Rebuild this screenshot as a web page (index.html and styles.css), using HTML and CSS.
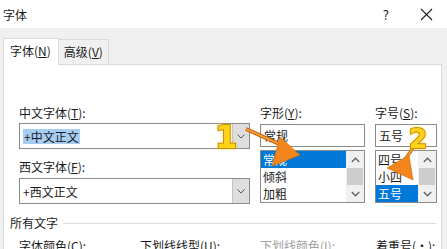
FILE: index.html
```html
<!DOCTYPE html>
<html lang="zh-CN">
<head>
  <meta charset="UTF-8">
  <title>字体</title>
  <link rel="stylesheet" href="styles.css">
</head>
<body>
  <div class="titlebar">
    <span class="title">字体</span>
    <span class="help">?</span>
    <svg class="close" width="13" height="13" viewBox="0 0 13 13"><path d="M1 1L12 12M12 1L1 12" stroke="#222" stroke-width="1.1" fill="none"/></svg>
  </div>

  <div class="tabs">
    <div class="tab active">字体(<u>N</u>)</div>
    <div class="tab">高级(<u>V</u>)</div>
  </div>

  <div class="panel">
    <div class="font-grid">
      <div class="col">
        <label>中文字体(<u>T</u>):</label>
        <div class="combo">
          <span class="combo-value"><span class="hilite">+中文正文</span></span>
          <span class="drop"><svg width="8" height="5" viewBox="0 0 8 5"><path d="M0.5 0.5L4 4L7.5 0.5" stroke="#555" fill="none"/></svg></span>
        </div>
        <label class="second">西文字体(<u>F</u>):</label>
        <div class="combo combo-low">
          <span class="combo-value">+西文正文</span>
          <span class="drop"><svg width="8" height="5" viewBox="0 0 8 5"><path d="M0.5 0.5L4 4L7.5 0.5" stroke="#555" fill="none"/></svg></span>
        </div>
      </div>

      <div class="col">
        <label>字形(<u>Y</u>):</label>
        <div class="textbox">常规</div>
        <div class="listbox">
          <ul class="items">
            <li class="sel">常规</li>
            <li>倾斜</li>
            <li>加粗</li>
          </ul>
          <div class="scrollbar">
            <span class="arrow"><svg width="9" height="6" viewBox="0 0 9 6"><path d="M0.8 5L4.5 1.2L8.2 5" stroke="#606060" stroke-width="1.3" fill="none"/></svg></span>
            <span class="thumb"></span>
            <span class="arrow"><svg width="9" height="6" viewBox="0 0 9 6"><path d="M0.8 1L4.5 4.8L8.2 1" stroke="#606060" stroke-width="1.3" fill="none"/></svg></span>
          </div>
        </div>
      </div>

      <div class="col">
        <label>字号(<u>S</u>):</label>
        <div class="textbox">五号</div>
        <div class="listbox">
          <ul class="items">
            <li>四号</li>
            <li>小四</li>
            <li class="sel">五号</li>
          </ul>
          <div class="scrollbar">
            <span class="arrow"><svg width="9" height="6" viewBox="0 0 9 6"><path d="M0.8 5L4.5 1.2L8.2 5" stroke="#606060" stroke-width="1.3" fill="none"/></svg></span>
            <span class="thumb"></span>
            <span class="arrow"><svg width="9" height="6" viewBox="0 0 9 6"><path d="M0.8 1L4.5 4.8L8.2 1" stroke="#606060" stroke-width="1.3" fill="none"/></svg></span>
          </div>
        </div>
      </div>
    </div>

    <div class="group-title"><span>所有文字</span><span class="rule"></span></div>

    <div class="effects-row">
      <span>字体颜色(<u>C</u>):</span>
      <span>下划线线型(<u>U</u>):</span>
      <span class="disabled">下划线颜色(<u>I</u>):</span>
      <span>着重号(·):</span>
    </div>
  </div>

  <!-- callout marks drawn over the dialog -->
  <svg class="callouts" width="447" height="249" viewBox="0 0 447 249">
    <defs>
      <filter id="glow" x="-50%" y="-50%" width="200%" height="200%">
        <feGaussianBlur in="SourceAlpha" stdDeviation="1.6" result="b"/>
        <feFlood flood-color="#f2c200" flood-opacity="0.55"/>
        <feComposite in2="b" operator="in" result="g"/>
        <feMerge><feMergeNode in="g"/><feMergeNode in="SourceGraphic"/></feMerge>
      </filter>
    </defs>
    <line x1="246" y1="129" x2="288" y2="148" stroke="#c85f00" stroke-width="3.6"/>
    <line x1="246" y1="129" x2="288" y2="148" stroke="#f7a640" stroke-width="1.8"/>
    <polygon points="272,166 280,137 300,155" fill="#f2851c" stroke="#d46a00" stroke-width="0.6"/>
    <text x="215" y="148" class="num num-1" filter="url(#glow)">1</text>

    <line x1="413" y1="148" x2="404" y2="161" stroke="#c85f00" stroke-width="3.2"/>
    <line x1="413" y1="148" x2="404" y2="161" stroke="#f7a640" stroke-width="1.6"/>
    <polygon points="387,168 409,155 413,180" fill="#f2851c" stroke="#d46a00" stroke-width="0.6"/>
    <text x="409" y="148" class="num num-2" filter="url(#glow)">2</text>
  </svg>
</body>
</html>
```

FILE: styles.css
```css
* {
  box-sizing: border-box;
}
body {
  margin: 0;
  width: 447px;
  height: 249px;
  overflow: hidden;
  position: relative;
  background-color: #f0f0f0;
  font-family: "Noto Sans CJK SC", "Microsoft YaHei", sans-serif;
  font-size: 12px;
  color: #1a1a1a;
}
u {
  text-underline-offset: 1px;
}
.titlebar {
  height: 28px;
  background-color: #fff;
  display: flex;
  align-items: center;
  padding-left: 3px;
}
.title {
  flex: 1;
}
.help {
  font-size: 13px;
  margin-right: 31px;
}
.close {
  margin-right: 14px;
}
.tabs {
  height: 36px;
  display: flex;
  align-items: flex-end;
  padding-left: 3px;
}
.tab {
  height: 25px;
  line-height: 24px;
  padding: 0 5px;
  border: 1px solid #d9d9d9;
  border-left: none;
  border-bottom: none;
  background-color: #f0f0f0;
}
.tab.active {
  position: relative;
  z-index: 1;
  height: 27px;
  margin-bottom: -1px;
  padding: 0 7px 0 6px;
  border-left: 1px solid #d9d9d9;
  background-color: #fff;
}
.panel {
  margin-left: 3px;
  width: 439px;
  height: 200px;
  background-color: #fff;
  border: 1px solid #d9d9d9;
  padding: 40px 5px 0 15px;
}
.font-grid {
  display: grid;
  grid-template-columns: 231px 105px 62px;
  column-gap: 10px;
  align-items: start;
}
.col {
  display: flex;
  flex-direction: column;
}
label {
  display: block;
  height: 16px;
  line-height: 16px;
}
label.second {
  margin-top: 10px;
}
.combo {
  height: 26px;
  margin-top: 2px;
  border: 1px solid #8a8a8a;
  display: flex;
}
.combo-low {
  margin-top: 3px;
}
.combo-value {
  flex: 1;
  padding-left: 3px;
  display: flex;
  align-items: center;
}
.hilite {
  background-color: #a6cdf2;
  line-height: 15px;
  padding: 0 1px;
}
.drop {
  width: 17px;
  background-color: #dedede;
  border-left: 1px solid #c4c4c4;
  display: flex;
  align-items: center;
  justify-content: center;
}
.textbox {
  height: 23px;
  margin-top: 3px;
  border: 1px solid #8a8a8a;
  padding-left: 3px;
  line-height: 21px;
}
.listbox {
  height: 53px;
  margin-top: 3px;
  border: 1px solid #8a8a8a;
  display: flex;
}
.items {
  flex: 1;
  list-style: none;
  margin: 0;
  padding: 0;
}
.items li {
  height: 17px;
  line-height: 17px;
  padding-left: 2px;
}
.items li.sel {
  background-color: #0078d7;
  color: #fff;
}
.scrollbar {
  width: 18px;
  background-color: #f0f0f0;
  display: flex;
  flex-direction: column;
}
.arrow {
  height: 17px;
  display: flex;
  align-items: center;
  justify-content: center;
}
.thumb {
  height: 17px;
  margin: 0 1px;
  background-color: #cdcdcd;
}
.group-title {
  display: flex;
  align-items: center;
  gap: 5px;
  margin: 11px 0 0 -9px;
  line-height: 16px;
}
.rule {
  flex: 1;
  border-top: 1px solid #dcdcdc;
}
.effects-row {
  display: grid;
  grid-template-columns: 121px 120px 116px auto;
  margin-top: 7px;
  line-height: 16px;
}
.disabled {
  color: #a0a0a0;
}
.callouts {
  position: absolute;
  top: 0;
  left: 0;
  pointer-events: none;
}
.num {
  font-family: "DejaVu Sans", sans-serif;
  font-weight: bold;
  fill: #ffd21f;
  stroke: #c98e00;
  stroke-width: 2;
  paint-order: stroke;
}
.num-1 {
  font-size: 32px;
}
.num-2 {
  font-size: 26px;
}
```
